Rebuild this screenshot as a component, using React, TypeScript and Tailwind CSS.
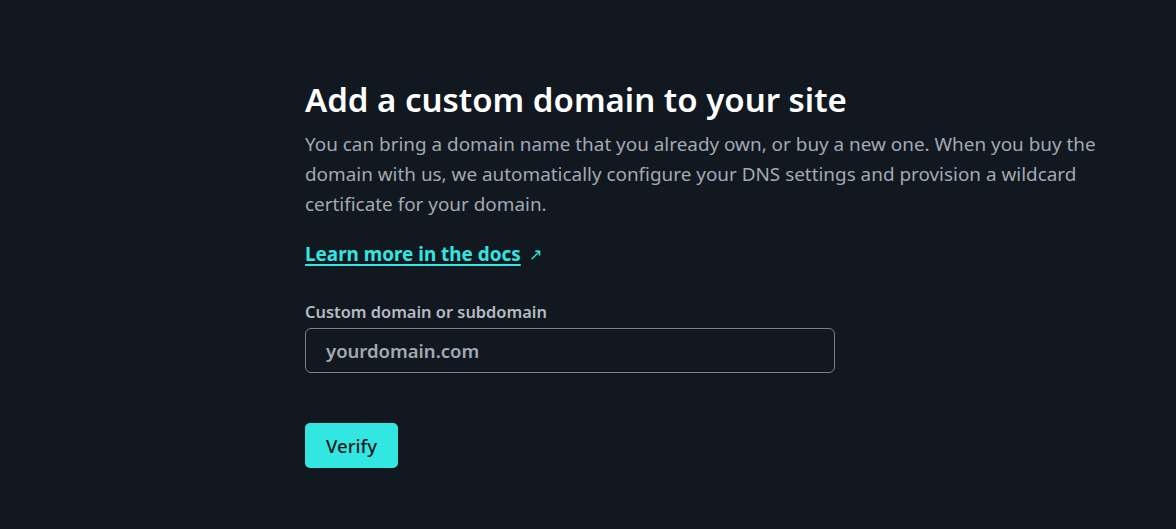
import React from 'react';

export default function App() {
    return (
        <div className="min-h-[529px] w-full bg-[#111820] font-['Noto_Sans',sans-serif]">
            <div className="pl-[305px] pr-[60px] pt-[78px]">
                <h1 className="text-[33px] font-semibold leading-[44px] text-white">Add a custom domain to your site</h1>
                <p className="mt-[7px] max-w-[810px] text-[18.9px] leading-[30px] text-[#a3a9b3]">
                    You can bring a domain name that you already own, or buy a new one. When you buy the domain with us, we
                    automatically configure your DNS settings and provision a wildcard certificate for your domain.
                </p>
                <a
                    href="#"
                    className="mt-[20px] inline-flex items-center gap-2 text-[18.9px] font-bold leading-[30px] text-[#32e6e2]"
                >
                    <span className="underline underline-offset-[3px] decoration-2">Learn more in the docs</span>
                    <span className="text-[16px] font-normal">↗</span>
                </a>
                <form className="mt-[31px]" onSubmit={(e) => e.preventDefault()}>
                    <label htmlFor="domain" className="block text-[16.4px] font-semibold leading-[24px] text-[#b5bac2]">
                        Custom domain or subdomain
                    </label>
                    <input
                        id="domain"
                        type="text"
                        placeholder="yourdomain.com"
                        className="mt-[4px] block h-[45px] w-[530px] rounded-[6px] border border-[#7b818b] bg-transparent px-[20px] text-[18.5px] font-semibold text-white placeholder-[#a3a9b3] outline-none"
                    />
                    <button className="mt-[50px] h-[45px] w-[93px] rounded-[5px] bg-[#32e6e2] text-[18.5px] font-medium text-[#111820]">
                        Verify
                    </button>
                </form>
            </div>
        </div>
    );
}
